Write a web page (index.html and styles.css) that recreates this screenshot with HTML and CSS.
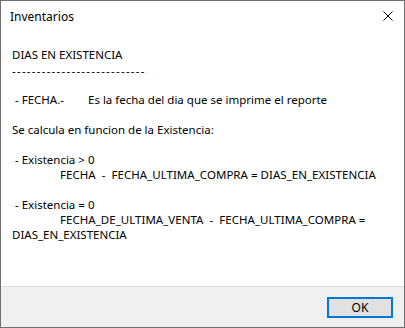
FILE: index.html
```html
<!DOCTYPE html>
<html lang="es">
<head>
  <meta charset="UTF-8">
  <title>Inventarios</title>
  <link rel="stylesheet" href="styles.css">
</head>
<body>

<div class="window">
  <div class="titlebar">
    <span class="title">Inventarios</span>
    <svg class="close" width="10" height="10" viewBox="0 0 10 10">
      <path d="M0.5 0.5 L9.5 9.5 M9.5 0.5 L0.5 9.5" stroke="#000" stroke-width="1" fill="none"/>
    </svg>
  </div>

  <div class="content">
    <div class="line">DIAS EN EXISTENCIA</div>
    <div class="line dashes">---------------------------</div>
    <div class="line"></div>
    <div class="line"><span class="label"> - FECHA.-</span>Es la fecha del dia que se imprime el reporte</div>
    <div class="line"></div>
    <div class="line">Se calcula en funcion de la Existencia:</div>
    <div class="line"></div>
    <div class="line"> - Existencia &gt; 0</div>
    <div class="line indent">FECHA&nbsp; - &nbsp;FECHA_ULTIMA_COMPRA = DIAS_EN_EXISTENCIA</div>
    <div class="line"></div>
    <div class="line"> - Existencia = 0</div>
    <div class="line indent">FECHA_DE_ULTIMA_VENTA&nbsp; - &nbsp;FECHA_ULTIMA_COMPRA =</div>
    <div class="line">DIAS_EN_EXISTENCIA</div>
  </div>

  <div class="footer">
    <button class="ok-btn">OK</button>
  </div>
</div>

</body>
</html>
```

FILE: styles.css
```css
body {
  margin: 0;
  font-family: "Noto Sans", sans-serif;
  font-size: 11.5px;
  color: #000;
  background: #fff;
}

.window {
  width: 405px;
  height: 328px;
  box-sizing: border-box;
  border: 1px solid #6f6f6f;
  display: flex;
  flex-direction: column;
  background: #fff;
}

.titlebar {
  height: 30px;
  display: flex;
  align-items: center;
  justify-content: space-between;
  padding: 0 11px 0 9px;
}

.title {
  font-size: 12px;
}

.content {
  flex: 1;
  padding: 16px 11px 0 11px;
}

.line {
  height: 15px;
  line-height: 15px;
  white-space: pre;
}

.dashes {
  letter-spacing: 1.25px;
  line-height: 13px;
  padding-top: 2px;
  height: 13px;
}

.label {
  display: inline-block;
  width: 76px;
}

.indent {
  padding-left: 48px;
  letter-spacing: 0.03px;
}

.footer {
  height: 40px;
  background: #f0f0f0;
  border-top: 1px solid #dcdcdc;
  display: flex;
  align-items: center;
  justify-content: flex-end;
  padding-right: 11px;
}

.ok-btn {
  width: 66px;
  height: 21px;
  box-sizing: border-box;
  border: 2px solid #0078d7;
  background: #e1e1e1;
  font-family: "Noto Sans", sans-serif;
  font-size: 12px;
  padding: 0;
  margin-top: 1px;
}
```
